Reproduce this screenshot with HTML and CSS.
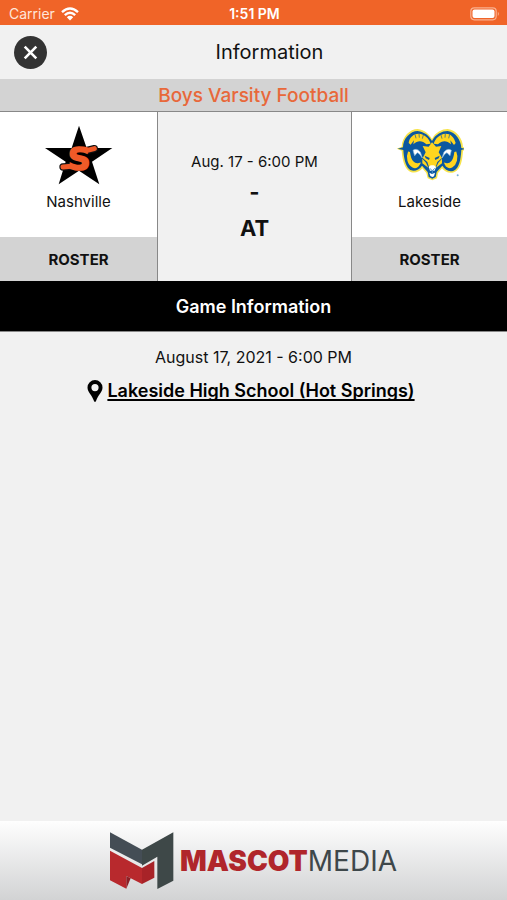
FILE: index.html
```html
<!DOCTYPE html>
<html lang="en">
<head>
<meta charset="utf-8">
<meta name="viewport" content="width=device-width, initial-scale=1">
<title>Information</title>
<link rel="stylesheet" href="styles.css">
</head>
<body>
<div class="status">
  <div class="carrier">
    <span>Carrier</span>
    <svg width="18" height="14" viewBox="0 0 18 14" aria-hidden="true">
      <g fill="none" stroke="#fff" stroke-width="2.4">
        <path d="M1 5.2Q9-2.2 17 5.2"/>
        <path d="M3.800 8.200Q9 3.400 14.200 8.200"/>
      </g>
      <path d="M5.800 10.300Q9 7.400 12.200 10.300L9 13.600Z" fill="#fff"/>
    </svg>
  </div>
  <span class="clock">1:51 PM</span>
  <svg class="battery" width="30" height="14" viewBox="0 0 30 14" aria-hidden="true">
    <rect x=".8" y=".8" width="25.400" height="12" rx="3.500" fill="none" stroke="#f9b08f" stroke-width="1.200"/>
    <rect x="2.500" y="2.500" width="22" height="8.600" rx="2" fill="#fff"/>
    <path d="M27.800 4.700Q30 6.800 27.800 8.900Z" fill="#f9b08f"/>
  </svg>
</div>
<header class="header">
  <button class="close" type="button" aria-label="Close">
    <svg width="33" height="33" viewBox="0 0 33 33" aria-hidden="true">
      <circle cx="16.500" cy="16.500" r="16.500" fill="#333"/>
      <path d="M10.700 10.700L22.300 22.300M22.300 10.700L10.700 22.300" stroke="#fff" stroke-width="2.600"/>
    </svg>
  </button>
  <h1>Information</h1>
</header>
<main>
  <h2 class="sport">Boys Varsity Football</h2>
  <section class="matchup">
    <div class="team">
      <div class="team-info">
        <svg width="68" height="60" viewBox="45 31 204 180" aria-hidden="true">
          <path d="M147 33L170 100H247L186 141L208 209L147 168L86 209L107 141L45 100H125Z" fill="#000"/>
          <g fill="none" stroke-linecap="round">
            <path d="M172 107L193 102M124 155L99 157" stroke="#111" stroke-width="22"/>
            <path d="M172 107L193 102M124 155L99 157" stroke="#f05a28" stroke-width="15"/>
          </g>
          <text class="monogram" x="148" y="166" text-anchor="middle">S</text>
        </svg>
        <span>Nashville</span>
      </div>
      <button class="roster" type="button">ROSTER</button>
    </div>
    <div class="score">
      <span class="when">Aug. 17 - 6:00 PM</span>
      <strong>-</strong>
      <strong>AT</strong>
    </div>
    <div class="team">
      <div class="team-info">
        <svg width="68" height="60" viewBox="40 34 204 180" aria-hidden="true">
          <path d="M42 105L57 99C58 69 82 46 105 46C126 48 140 62 148 76C158 56 178 46 195 46C222 49 240 75 241 100L254 105L241 111C239 139 235 167 214 176C198 181 186 173 178 164L166 178L163 194L149 200L135 194L131 178L119 164C111 176 91 181 79 172C62 158 59 132 57 111Z" fill="#f7e34a"/>
          <path d="M45 105L61 101C61 75 83 52 105 52C125 54 140 67 148 82C158 62 178 52 195 52C219 55 235 80 236 103L250 105L236 109C234 139 230 163 213 171C198 176 188 168 179 156L162 175L159 190L149 195L138 190L135 175L118 156C109 170 91 176 80 167C68 156 63 131 62 109Z" fill="#0b58a0"/>
          <path d="M78 88C80 70 94 60 108 60C126 61 139 74 144 90L131 92C119 80 105 79 92 92L94 80L84 93ZM219 88C214 70 204 60 189 60C171 61 158 74 153 90L166 92C178 80 192 79 205 92L203 80L214 94Z" fill="#ffd51f"/>
          <path d="M97 62L100 74M109 60L110 72M122 64L119 75M201 62L198 74M188 60L187 72M175 64L178 75" stroke="#0b58a0" stroke-width="2"/>
          <path d="M79 115C72 132 77 151 91 159C98 163 105 158 109 151C94 155 82 142 79 115ZM218 115C225 132 220 151 207 159C199 163 192 158 189 151C204 155 215 142 218 115Z" fill="#ffd51f" stroke="#ffd51f" stroke-width="6"/>
          <path d="M91 110Q102 102 113 115L119 133Q110 118 104 117L96 126ZM206 110Q195 102 184 115L178 133Q187 118 193 117L202 126Z" fill="#fff" stroke="#86b9df" stroke-width="2"/>
          <path d="M148 86L160 99L176 97L168 116L178 133L164 145L157 166H141L134 145L120 133L129 116L120 97L138 99Z" fill="#ffd51f"/>
          <path d="M119 135L130 147L137 162L119 149ZM178 135L167 147L160 162L178 149Z" fill="#ffd51f"/>
          <path d="M126 126L141 133L139 139L129 134ZM171 126L156 133L158 139L168 134Z" fill="#0b58a0"/>
          <path d="M138 160L144 155H154L160 160L156 171H142ZM140 177L148 181L157 177L154 188L149 190L143 187Z" fill="#fff"/>
          <path d="M142 164L149 172L156 164M149 172V180" fill="none" stroke="#4c91c8" stroke-width="3"/>
          <circle cx="225" cy="185" r="3" fill="#79aed3"/>
        </svg>
        <span>Lakeside</span>
      </div>
      <button class="roster" type="button">ROSTER</button>
    </div>
  </section>
  <h2 class="section-title">Game Information</h2>
  <section class="details">
    <p>August 17, 2021 - 6:00 PM</p>
    <div class="venue">
      <svg width="16" height="22" viewBox="0 0 16 22" aria-hidden="true">
        <path fill-rule="evenodd" d="M8 0A7.500 7.500 0 0 0 .5 7.500C.5 12 5 15 7 21Q8 23 9 21C11 15 15.500 12 15.500 7.500A7.500 7.500 0 0 0 8 0ZM8 4A3.600 3.600 0 1 1 8 11.200A3.600 3.600 0 0 1 8 4Z"/>
      </svg>
      <a href="#venue">Lakeside High School (Hot Springs)</a>
    </div>
  </section>
</main>
<footer class="sponsor">
  <svg width="64" height="58" viewBox="30 52 192 174" aria-hidden="true">
    <path d="M30 53L126 105V149L30 99Z" fill="#444d55"/>
    <path d="M126 105L220 53V198L172 223V126L126 153Z" fill="#3e4848"/>
    <path d="M30 108L126 160V208L79 184V222L30 197Z" fill="#b8292d"/>
    <path d="M126 160L163 139V189L126 208Z" fill="#a82328"/>
    <path d="M79 222V184L92 191Z" fill="#8d2026"/>
  </svg>
  <div class="wordmark"><b>MASCOT</b><span>MEDIA</span></div>
</footer>
</body>
</html>
```
FILE: styles.css
```css
* {
  box-sizing: border-box;
}

body {
  margin: 0;
  min-height: 100vh;
  display: flex;
  flex-direction: column;
  background: #f1f1f1;
  color: #111;
  font-family: Inter, "Liberation Sans", sans-serif;
  font-size: 15px;
}

h1,
h2,
p {
  margin: 0;
  font-weight: 400;
}

button {
  border: 0;
  padding: 0;
  font: inherit;
  color: inherit;
  cursor: pointer;
}

svg {
  display: block;
  flex: none;
}

.status {
  display: grid;
  grid-template-columns: 1fr auto 1fr;
  align-items: center;
  height: 25px;
  padding: 2px 7px 0 9px;
  background: #f06428;
  color: #fff;
  font-size: 14px;
}

.carrier {
  display: flex;
  align-items: center;
  gap: 6px;
  color: #ffe6da;
}

.clock {
  font-weight: 600;
}

.battery {
  justify-self: end;
}

.header {
  display: grid;
  grid-template-columns: 33px 1fr 33px;
  align-items: center;
  height: 54px;
  padding: 0 14px;
}

.header h1 {
  padding-left: 32px;
  text-align: center;
  font-size: 20px;
}

.close {
  background: none;
}

.sport {
  height: 33px;
  border-bottom: 1px solid #888;
  background: #d3d3d3;
  color: #e8683a;
  text-align: center;
  font-size: 19px;
  font-weight: 500;
  line-height: 34px;
}

.matchup {
  display: grid;
  grid-template-columns: 157fr 195fr 155fr;
  height: 169px;
}

.team {
  display: flex;
  flex-direction: column;
}

.team-info {
  flex: 1;
  display: flex;
  flex-direction: column;
  align-items: center;
  gap: 8px;
  padding-top: 13px;
  background: #fff;
  font-size: 15px;
  line-height: 18px;
}

.monogram {
  font: 700 94px "DejaVu Sans", sans-serif;
  fill: #f05a28;
  stroke: #f05a28;
  stroke-width: 5px;
}

.roster {
  height: 44px;
  background: #d3d3d3;
  font-size: 15px;
  font-weight: 700;
}

.score {
  display: flex;
  flex-direction: column;
  align-items: center;
  padding-top: 38px;
  border: solid #888;
  border-width: 0 1px;
}

.when {
  font-size: 15px;
  line-height: 24px;
}

.score strong {
  font-size: 22px;
  line-height: 36px;
}

.section-title {
  height: 51px;
  border-bottom: 1px solid #888;
  background: #000;
  color: #fff;
  text-align: center;
  font-size: 18px;
  font-weight: 600;
  line-height: 51px;
}

.details {
  padding-top: 13px;
  text-align: center;
}

.details p {
  font-size: 16px;
  line-height: 24px;
}

.venue {
  display: flex;
  justify-content: center;
  align-items: center;
  gap: 4px;
  padding-top: 10px;
  padding-right: 5px;
}

.venue a {
  color: #000;
  font-size: 18px;
  font-weight: 600;
  line-height: 24px;
  text-underline-offset: 2px;
  text-decoration-thickness: 2px;
  text-decoration-skip-ink: none;
}

.sponsor {
  display: flex;
  justify-content: center;
  align-items: center;
  gap: 6px;
  height: 79px;
  margin-top: auto;
  background: linear-gradient(#fefefe, #d2d3d4);
}

.wordmark {
  color: #3e474a;
  font-size: 28px;
}

.wordmark b {
  color: #b0262b;
  font-weight: 900;
}
```
